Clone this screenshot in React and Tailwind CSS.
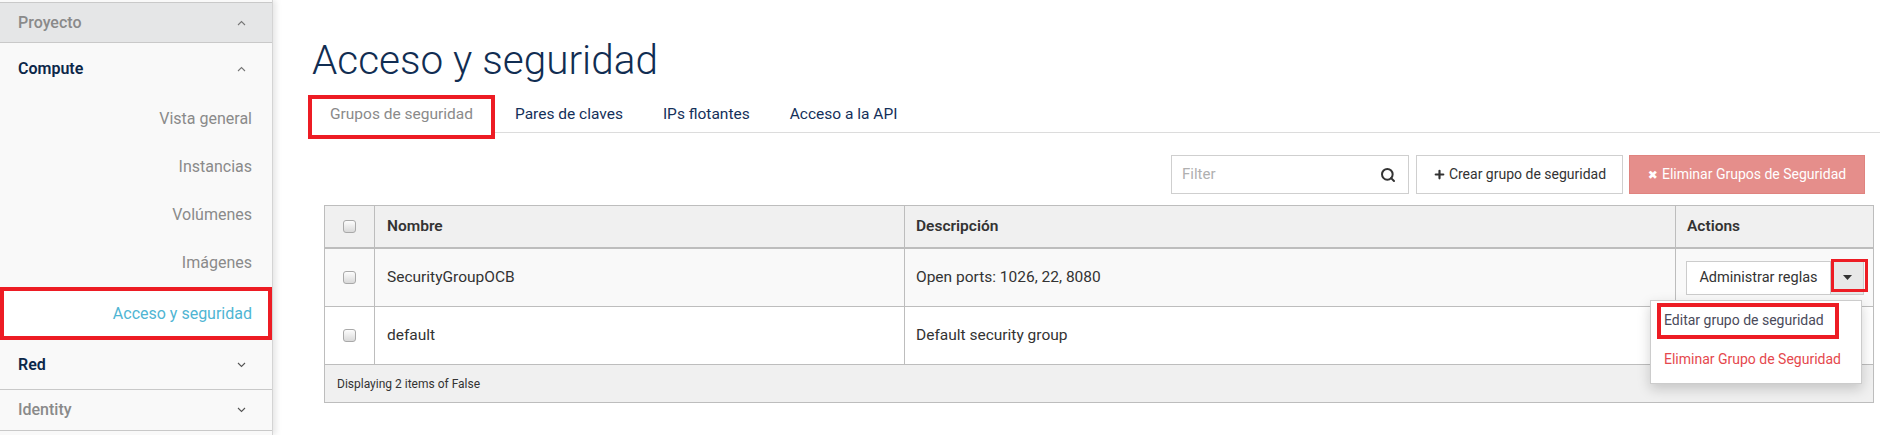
import React from 'react';
import { Search, Plus } from 'lucide-react';

const subItems = ['Vista general', 'Instancias', 'Volúmenes', 'Imágenes'];
const tabs = ['Pares de claves', 'IPs flotantes', 'Acceso a la API'];

const rows = [
    { name: 'SecurityGroupOCB', desc: 'Open ports: 1026, 22, 8080', bg: 'bg-[#f9f9f9]', menu: true },
    { name: 'default', desc: 'Default security group', bg: 'bg-white', menu: false },
];

const Chevron = ({ up }) => (
    <svg width="9" height="6" viewBox="0 0 9 6" className="shrink-0">
        <polyline
            points={up ? '1,5 4.5,1.5 8,5' : '1,1 4.5,4.5 8,1'}
            fill="none"
            stroke={up ? '#777' : '#555'}
            strokeWidth="1.1"
        />
    </svg>
);

const Checkbox = () => (
    <div className="w-[13px] h-[13px] rounded-[3px] border border-[#a9a9a9] bg-gradient-to-b from-[#fdfdfd] to-[#d9d9d9]" />
);

const App = () => {
    return (
        <div className="flex w-[1880px] h-[435px] bg-white overflow-hidden font-['Roboto',sans-serif]">
            {/* Sidebar */}
            <aside className="w-[273px] shrink-0 h-[435px] bg-[#f9f9f9] border-r border-[#d4d4d4] shadow-[3px_0_6px_rgba(0,0,0,0.10)] relative z-10">
                <div className="mt-[2px] h-[41px] bg-[#e5e6e7] border-y border-[#c9c9c9] flex items-center justify-between pl-[18px] pr-[26px] text-[16px] font-medium text-[#8a8a8a]">
                    Proyecto <Chevron up />
                </div>
                <div className="h-[52px] flex items-center justify-between pl-[18px] pr-[26px] text-[16px] font-semibold text-[#0c2749]">
                    Compute <Chevron up />
                </div>
                {subItems.map(item => (
                    <div key={item} className="h-[48px] flex items-center justify-end pr-[20px] text-[16px] text-[#8a8a8a]">
                        {item}
                    </div>
                ))}
                <div className="h-[53px] w-[272px] border-4 border-[#ed1c24] bg-white flex items-center justify-end pr-[16px] text-[16px] text-[#4fb5d3]">
                    Acceso y seguridad
                </div>
                <div className="h-[50px] border-b border-[#c9c9c9] flex items-center justify-between pl-[18px] pr-[26px] text-[16px] font-semibold text-[#0c2749]">
                    Red <Chevron />
                </div>
                <div className="h-[41px] border-b border-[#c9c9c9] flex items-center justify-between pl-[18px] pr-[26px] text-[16px] font-medium text-[#8a8a8a]">
                    Identity <Chevron />
                </div>
            </aside>

            {/* Main */}
            <main className="flex-1 min-w-0">
                <div className="pl-[35px] pt-[36px]">
                    <h1 className="ml-[4px] h-[48px] text-[40.5px] leading-[48px] font-light text-[#112d52]">
                        Acceso y seguridad
                    </h1>
                    <div className="mt-[11px] flex h-[38px] border-b border-[#dcdcdc]">
                        <div className="relative z-10 h-[44px] border-4 border-[#ed1c24] bg-white px-[18px] pt-[5px] text-[15.5px] leading-[20px] text-[#8a8a8a]">
                            Grupos de seguridad
                        </div>
                        {tabs.map(tab => (
                            <div key={tab} className="px-[20px] pt-[9px] text-[15.5px] leading-[20px] text-[#14305a]">
                                {tab}
                            </div>
                        ))}
                    </div>
                </div>

                <div className="pl-[51px] pr-[6px]">
                    {/* Toolbar */}
                    <div className="mt-[22px] flex justify-end items-center pr-[9px]">
                        <div className="w-[238px] h-[39px] border border-[#cfcfcf] bg-white flex items-center justify-between pl-[10px] pr-[12px]">
                            <span className="text-[15px] text-[#b0b0b0]">Filter</span>
                            <Search size={16} strokeWidth={3} className="text-[#333]" />
                        </div>
                        <div className="ml-[7px] w-[207px] h-[39px] border border-[#cfcfcf] bg-white flex items-center justify-center gap-[3px] text-[14px] text-[#333]">
                            <Plus size={13} strokeWidth={4} /> Crear grupo de seguridad
                        </div>
                        <div className="ml-[6px] w-[236px] h-[39px] bg-[#e58e8b] border border-[#e0837f] flex items-center justify-center gap-[4px] text-[14px] text-white">
                            <span className="text-[12px] font-['DejaVu_Sans',sans-serif]">✖</span> Eliminar Grupos de Seguridad
                        </div>
                    </div>

                    {/* Table */}
                    <div className="mt-[11px] border border-[#bdbdbd] text-[15.5px] text-[#333]">
                        <div className="flex h-[43px] bg-[#f0f0f0] border-b-2 border-[#bdbdbd]">
                            <div className="w-[50px] shrink-0 border-r border-[#bdbdbd] flex items-center justify-center">
                                <Checkbox />
                            </div>
                            <div className="w-[530px] shrink-0 border-r border-[#bdbdbd] flex items-center pl-[12px] font-semibold">Nombre</div>
                            <div className="flex-1 border-r border-[#bdbdbd] flex items-center pl-[11px] font-semibold">Descripción</div>
                            <div className="w-[197px] shrink-0 flex items-center pl-[11px] font-semibold">Actions</div>
                        </div>
                        {rows.map(row => (
                            <div key={row.name} className={`flex h-[58px] border-b border-[#bdbdbd] ${row.bg}`}>
                                <div className="w-[50px] shrink-0 border-r border-[#bdbdbd] flex items-center justify-center">
                                    <Checkbox />
                                </div>
                                <div className="w-[530px] shrink-0 border-r border-[#bdbdbd] flex items-center pl-[12px]">{row.name}</div>
                                <div className="flex-1 border-r border-[#bdbdbd] flex items-center pl-[11px]">{row.desc}</div>
                                <div className="w-[197px] shrink-0 flex items-center pl-[10px]">
                                    {row.menu && (
                                        <div className="relative flex h-[34px]">
                                            <div className="w-[145px] border border-[#cccccc] bg-white flex items-center justify-center text-[14.5px] text-[#333]">
                                                Administrar reglas
                                            </div>
                                            <div className="w-[33px] border border-l-0 border-[#cccccc] bg-[#e8e8e8] flex items-center justify-center">
                                                <svg width="9" height="5" viewBox="0 0 9 5"><polygon points="0,0 9,0 4.5,5" fill="#333" /></svg>
                                            </div>
                                            <div className="absolute left-[145px] top-[-2px] w-[37px] h-[33px] border-[3px] border-[#ed1c24]" />
                                            <div className="absolute right-[2px] top-[39px] z-20 w-[212px] bg-white border border-[#cccccc] shadow-[0_5px_12px_rgba(0,0,0,0.18)] pt-[2px] pb-[3px]">
                                                <div className="ml-[6px] w-[182px] h-[36px] border-4 border-[#ed1c24] flex items-center pl-[3px] text-[14px] text-[#4a4a5a] whitespace-nowrap">
                                                    Editar grupo de seguridad
                                                </div>
                                                <div className="h-[41px] flex items-center pl-[13px] text-[14px] text-[#e5484d] whitespace-nowrap">
                                                    Eliminar Grupo de Seguridad
                                                </div>
                                            </div>
                                        </div>
                                    )}
                                </div>
                            </div>
                        ))}
                        <div className="h-[37px] bg-[#f0f0f0] flex items-center pl-[12px] text-[12px] text-[#333]">
                            Displaying 2 items of False
                        </div>
                    </div>
                </div>
            </main>
        </div>
    );
};

export default App;
